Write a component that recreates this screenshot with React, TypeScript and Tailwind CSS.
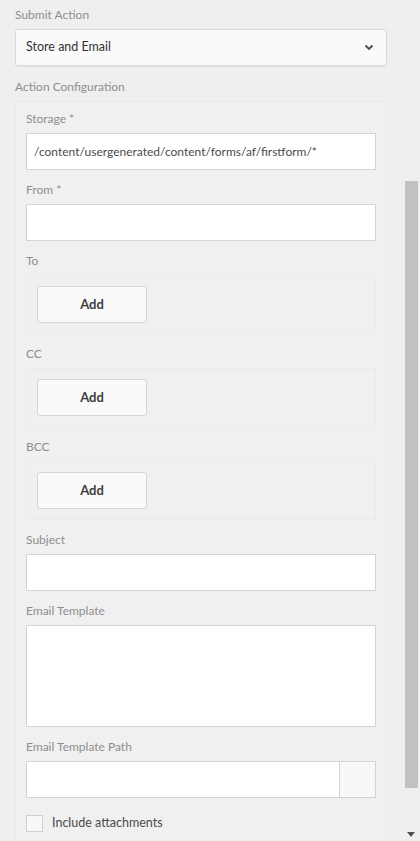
import type { FC, ReactNode } from "react";

const Label: FC<{ children: ReactNode }> = ({ children }) => (
  <div className="h-4 text-[12px] leading-4 text-[#8e8e8e]">{children}</div>
);

const TextInput: FC<{ value?: string }> = ({ value }) => (
  <div className="flex h-[37px] items-center border border-[#d4d4d4] bg-white px-[7px] text-[12px] text-[#4b4b4b]">
    {value}
  </div>
);

const AddField: FC = () => (
  <div className="h-[59px] border border-[#ebebeb] px-[10px] py-[10px]">
    <button
      type="button"
      className="flex h-[37px] w-[110px] items-center justify-center rounded-[3px] border border-[#d6d6d6] bg-[#fafafa] text-[13px] font-bold text-[#3c3c3c]"
    >
      Add
    </button>
  </div>
);

export default function App() {
  return (
    <div
      className="flex h-[841px] w-[420px] overflow-hidden bg-[#efefef]"
      style={{ fontFamily: "Lato, 'Open Sans', sans-serif" }}
    >
      <div className="w-[387px] shrink-0 pl-[15px] pt-[7px]">
        <Label>Submit Action</Label>
        <div className="mt-[6px] flex h-[37px] items-center justify-between rounded-[3px] border border-[#d8d8d8] bg-[#fafafa] pl-[10px] pr-[12px] text-[12.5px] text-[#333] shadow-[0_1px_1px_rgba(0,0,0,0.06)]">
          <span>Store and Email</span>
          <svg width="10" height="7" viewBox="0 0 10 7" fill="none">
            <path d="M1.5 1.5 5 5l3.5-3.5" stroke="#4b4b4b" strokeWidth="1.8" />
          </svg>
        </div>
        <div className="mt-[13px]">
          <Label>Action Configuration</Label>
        </div>
        <div className="mt-[6px] h-[800px] border border-[#eaeaea] bg-[#f0f0f0] px-[10px] pt-[9px]">
          <div className="flex flex-col gap-[12px]">
            <div className="flex flex-col gap-[6px]">
              <Label>Storage *</Label>
              <TextInput value="/content/usergenerated/content/forms/af/firstform/*" />
            </div>
            <div className="flex flex-col gap-[6px]">
              <Label>From *</Label>
              <TextInput />
            </div>
            <div className="flex flex-col gap-[6px]">
              <Label>To</Label>
              <AddField />
            </div>
            <div className="flex flex-col gap-[6px]">
              <Label>CC</Label>
              <AddField />
            </div>
            <div className="flex flex-col gap-[6px]">
              <Label>BCC</Label>
              <AddField />
            </div>
            <div className="flex flex-col gap-[6px]">
              <Label>Subject</Label>
              <TextInput />
            </div>
            <div className="flex flex-col gap-[6px]">
              <Label>Email Template</Label>
              <div className="h-[102px] border border-[#d4d4d4] bg-white" />
            </div>
            <div className="flex flex-col gap-[6px]">
              <Label>Email Template Path</Label>
              <div className="flex h-[37px] border border-[#d4d4d4] bg-white">
                <div className="flex-1" />
                <div className="w-[36px] border-l border-[#d4d4d4] bg-[#f8f8f8]" />
              </div>
            </div>
            <label className="mt-[4px] flex items-center gap-[9px] text-[12.5px] text-[#4b4b4b]">
              <span className="h-[17px] w-[17px] border border-[#d0d0d0] bg-[#f8f8f8]" />
              Include attachments
            </label>
          </div>
        </div>
      </div>
      <div className="flex flex-1 flex-col items-end pr-[2px] pt-[181px]">
        <div className="h-[607px] w-[13px] bg-[#c1c1c1]" />
        <div className="flex-1" />
        <svg width="8" height="6" viewBox="0 0 8 6" className="mb-[3px] mr-[3px]">
          <path d="M0 0h8L4 5z" fill="#505050" />
        </svg>
      </div>
    </div>
  );
}
